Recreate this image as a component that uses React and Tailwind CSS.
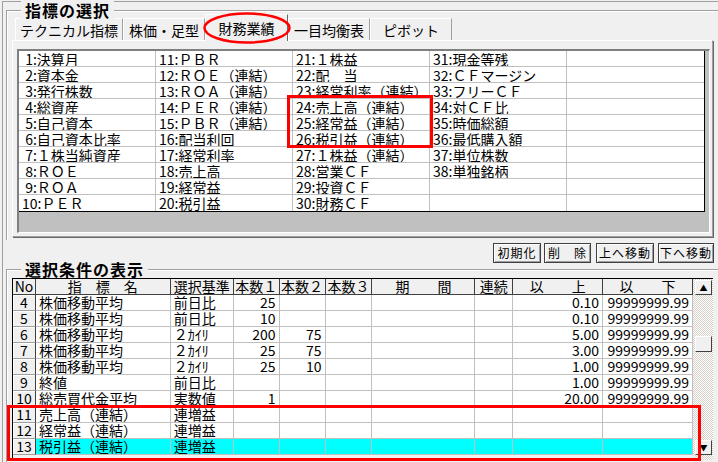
const gridColumns = [
  [' 1:決算月', ' 2:資本金', ' 3:発行株数', ' 4:総資産', ' 5:自己資本', ' 6:自己資本比率', ' 7:１株当純資産', ' 8:ＲＯＥ', ' 9:ＲＯＡ', '10:ＰＥＲ'],
  ['11:ＰＢＲ', '12:ＲＯＥ（連結）', '13:ＲＯＡ（連結）', '14:ＰＥＲ（連結）', '15:ＰＢＲ（連結）', '16:配当利回', '17:経常利率', '18:売上高', '19:経常益', '20:税引益'],
  ['21:１株益', '22:配　当', '23:経常利率（連結）', '24:売上高（連結）', '25:経常益（連結）', '26:税引益（連結）', '27:１株益（連結）', '28:営業ＣＦ', '29:投資ＣＦ', '30:財務ＣＦ'],
  ['31:現金等残', '32:ＣＦマージン', '33:フリーＣＦ', '34:対ＣＦ比', '35:時価総額', '36:最低購入額', '37:単位株数', '38:単独銘柄', '', ''],
  ['', '', '', '', '', '', '', '', '', ''],
];

const tabs = [
  { label: 'テクニカル指標', w: 'w-[108px]' },
  { label: '株価・足型', w: 'w-[82px]' },
  { label: '財務業績', w: 'w-[83px]', active: true },
  { label: '一目均衡表', w: 'w-[82px]' },
  { label: 'ピボット', w: 'w-[82px]' },
];

const buttons = [
  { label: '初期化', w: 'w-[48px]', ml: 'ml-0' },
  { label: '削　除', w: 'w-[47px]', ml: 'ml-[3px]' },
  { label: '上へ移動', w: 'w-[58px]', ml: 'ml-[5px]' },
  { label: '下へ移動', w: 'w-[56px]', ml: 'ml-[4px]' },
];

// column widths of the condition table
const cols = [
  { key: 'no', head: 'No', w: 'w-[23px]' },
  { key: 'name', head: '指　標　名', w: 'w-[135px]' },
  { key: 'basis', head: '選択基準', w: 'w-[63px]' },
  { key: 'n1', head: '本数１', w: 'w-[46px]', right: true },
  { key: 'n2', head: '本数２', w: 'w-[46px]', right: true },
  { key: 'n3', head: '本数３', w: 'w-[47px]', right: true },
  { key: 'period', head: '期　　間', w: 'w-[103px]' },
  { key: 'cont', head: '連続', w: 'w-[38px]' },
  { key: 'min', head: '以　　上', w: 'w-[90px]', right: true },
  { key: 'max', head: '以　　下', w: 'w-[90px]', right: true },
];

const rows = [
  { no: '4', name: '株価移動平均', basis: '前日比', n1: '25', min: '0.10', max: '99999999.99' },
  { no: '5', name: '株価移動平均', basis: '前日比', n1: '10', min: '0.10', max: '99999999.99' },
  { no: '6', name: '株価移動平均', basis: '２ｶｲﾘ', n1: '200', n2: '75', min: '5.00', max: '99999999.99' },
  { no: '7', name: '株価移動平均', basis: '２ｶｲﾘ', n1: '25', n2: '75', min: '3.00', max: '99999999.99' },
  { no: '8', name: '株価移動平均', basis: '２ｶｲﾘ', n1: '25', n2: '10', min: '1.00', max: '99999999.99' },
  { no: '9', name: '終値', basis: '前日比', min: '1.00', max: '99999999.99' },
  { no: '10', name: '総売買代金平均', basis: '実数値', n1: '1', min: '20.00', max: '99999999.99' },
  { no: '11', name: '売上高（連結）', basis: '連増益' },
  { no: '12', name: '経常益（連結）', basis: '連増益' },
  { no: '13', name: '税引益（連結）', basis: '連増益', selected: true },
];

function GroupTitle({ children }) {
  return (
    <div className="absolute left-[14px] -top-[10px] bg-[#f0f0f0] px-[4px] text-[16px] font-bold leading-[18px] tracking-[1px]">
      {children}
    </div>
  );
}

export default function App() {
  return (
    <div className="relative w-[718px] h-[462px] overflow-hidden bg-[#f0f0f0] text-[14px] leading-[16px] text-black font-['Noto_Sans_CJK_JP','Noto_Sans_CJK_SC',sans-serif]">
      <div className="ml-[2px] mt-[1px] h-[461px] border-l border-t border-[#a0a0a0]">
        {/* 指標の選択 */}
        <div className="relative ml-[3px] mt-[8px] h-[230px] border-l border-t border-[#a0a0a0] shadow-[inset_1px_1px_0_#fff]">
          <GroupTitle>指標の選択</GroupTitle>

          <div className="ml-[5px] mt-[3px]">
            <div className="flex h-[26px] items-end pl-[3px]">
              {tabs.map((tab) =>
                tab.active ? (
                  <div
                    key={tab.label}
                    className={`${tab.w} relative z-10 -mb-px h-[27px] border-l border-t border-r border-l-white border-t-white border-r-[#696969] bg-[#f0f0f0] pt-[5px] text-center whitespace-nowrap`}
                  >
                    {tab.label}
                  </div>
                ) : (
                  <div
                    key={tab.label}
                    className={`${tab.w} h-[22px] border-l border-t border-r border-l-white border-t-white border-r-[#a0a0a0] pt-[3px] text-center whitespace-nowrap`}
                  >
                    {tab.label}
                  </div>
                )
              )}
            </div>

            <div className="w-[701px] h-[197px] border-l border-t border-r border-b border-l-white border-t-white border-r-[#a0a0a0] border-b-[#a0a0a0] shadow-[1px_1px_0_#696969]">
              <div className="ml-[4px] mt-[8px] w-[693px] h-[184px] border-t-2 border-l-2 border-r border-b border-t-[#808080] border-l-[#808080] border-r-white border-b-white bg-[#c0c0c0]">
                <div className="flex w-[686px] border-r border-b border-black bg-white">
                  {gridColumns.map((col, ci) => (
                    <div key={ci} className={`w-[137px] ${ci < 4 ? 'border-r border-[#c0c0c0]' : ''}`}>
                      {col.map((item, ri) => (
                        <div
                          key={ri}
                          className={`h-[16px] overflow-hidden whitespace-pre pl-[3px] ${ri < 9 ? 'border-b border-[#c0c0c0]' : ''}`}
                        >
                          {item}
                        </div>
                      ))}
                    </div>
                  ))}
                </div>
              </div>
            </div>
          </div>
        </div>

        {/* buttons */}
        <div className="mt-[3px] flex w-[711px] justify-end">
          {buttons.map((b) => (
            <div
              key={b.label}
              className={`${b.w} ${b.ml} h-[20px] border border-[#404040] bg-[#f0f0f0] shadow-[inset_1px_1px_0_#fff,inset_-1px_-1px_0_#a0a0a0] text-center text-[12px] leading-[18px] tracking-[1px] whitespace-nowrap`}
            >
              {b.label}
            </div>
          ))}
        </div>

        {/* 選択条件の表示 */}
        <div className="relative ml-[3px] mt-[6px] h-[200px] border-l border-t border-[#a0a0a0] shadow-[inset_1px_1px_0_#fff]">
          <GroupTitle>選択条件の表示</GroupTitle>

          <div className="ml-[5px] mt-[8px] flex">
            <div className="w-[681px] border-l border-t border-black">
              <div className="flex h-[16px] bg-[#f0f0f0]">
                {cols.map((c) => (
                  <div
                    key={c.key}
                    className={`${c.w} h-[16px] border-r border-b border-[#404040] text-center whitespace-pre overflow-hidden leading-[15px]`}
                  >
                    {c.head}
                  </div>
                ))}
              </div>
              {rows.map((r) => (
                <div key={r.no} className="flex h-[16px]">
                  {cols.map((c) =>
                    c.key === 'no' ? (
                      <div
                        key={c.key}
                        className={`${c.w} h-[16px] border-r border-b border-r-[#404040] border-b-[#a0a0a0] bg-[#f0f0f0] shadow-[inset_1px_1px_0_#fff] text-center leading-[15px]`}
                      >
                        {r.no}
                      </div>
                    ) : (
                      <div
                        key={c.key}
                        className={`${c.w} h-[16px] border-r border-b border-[#c0c0c0] overflow-hidden whitespace-pre leading-[15px] ${
                          r.selected ? 'bg-[#00ffff]' : 'bg-white'
                        } ${c.right ? 'text-right pr-[3px]' : 'pl-[3px]'}`}
                      >
                        {r[c.key] || ''}
                      </div>
                    )
                  )}
                </div>
              ))}
            </div>

            {/* scrollbar */}
            <div className="w-[20px] h-[182px] border-t border-black pl-[2px] pt-[1px] bg-[repeating-conic-gradient(#ffffff_0_25%,#d4d0c8_0_50%)] bg-[length:2px_2px]">
              <div className="flex h-[15px] w-[17px] items-center justify-center border border-t-white border-l-white border-r-[#404040] border-b-[#404040] bg-[#f0f0f0] text-[8px]">
                ▲
              </div>
              <div className="mt-[41px] h-[16px] w-[17px] border border-t-white border-l-white border-r-[#404040] border-b-[#404040] bg-[#f0f0f0]" />
              <div className="mt-[88px] flex h-[15px] w-[17px] items-center justify-center border border-t-white border-l-white border-r-[#404040] border-b-[#404040] bg-[#f0f0f0] text-[8px]">
                ▼
              </div>
            </div>
          </div>
        </div>
      </div>

      {/* red annotations */}
      <svg className="absolute left-[202px] top-[11px] z-20" width="90" height="34" viewBox="0 0 90 34">
        <ellipse cx="45" cy="17" rx="42.5" ry="14.5" fill="none" stroke="#ff0000" strokeWidth="2.5" />
      </svg>
      <div className="absolute z-20 left-[287px] top-[95px] w-[146px] h-[53px] border-[3px] border-[#ff0000]" />
      <div className="absolute z-20 left-[7px] top-[405px] w-[694px] h-[56px] border-[3px] border-[#ff0000]" />
    </div>
  );
}
